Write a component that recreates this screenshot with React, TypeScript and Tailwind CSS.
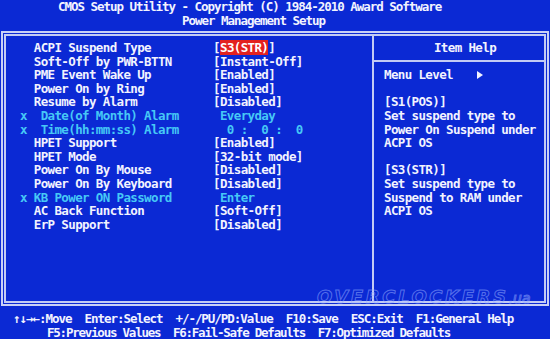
const items = [
  { label: 'ACPI Suspend Type', value: '[S3(STR)]', sel: true },
  { label: 'Soft-Off by PWR-BTTN', value: '[Instant-Off]' },
  { label: 'PME Event Wake Up', value: '[Enabled]' },
  { label: 'Power On by Ring', value: '[Enabled]' },
  { label: 'Resume by Alarm', value: '[Disabled]' },
  { label: 'Date(of Month) Alarm', value: ' Everyday', off: true, sub: true },
  { label: 'Time(hh:mm:ss) Alarm', value: '  0 :  0 :  0', off: true, sub: true },
  { label: 'HPET Support', value: '[Enabled]' },
  { label: 'HPET Mode', value: '[32-bit mode]' },
  { label: 'Power On By Mouse', value: '[Disabled]' },
  { label: 'Power On By Keyboard', value: '[Disabled]' },
  { label: 'KB Power ON Password', value: ' Enter', off: true },
  { label: 'AC Back Function', value: '[Soft-Off]' },
  { label: 'ErP Support', value: '[Disabled]' },
];

const help = [
  '',
  '[S1(POS)]',
  'Set suspend type to',
  'Power On Suspend under',
  'ACPI OS',
  '',
  '[S3(STR)]',
  'Set suspend type to',
  'Suspend to RAM under',
  'ACPI OS',
];

function ItemRow({ item }: { item: (typeof items)[number] }) {
  const head = ((item.off ? 'x ' : '  ') + (item.sub ? ' ' : '') + item.label).padEnd(28, ' ');
  return (
    <div className={`h-[13.6px] leading-[13.6px] whitespace-pre ${item.off ? 'text-[#46c8f6]' : 'text-[#f2f3ff]'}`}>
      {head}
      {item.sel ? (
        <>
          [<span className="bg-[#e3211f] text-white">S3(STR)</span>]
        </>
      ) : (
        item.value
      )}
    </div>
  );
}

export default function App() {
  return (
    <div className="relative w-[550px] h-[339px] overflow-hidden bg-[#0b29d4] font-['DejaVu_Sans_Mono',monospace] font-bold text-[12.5px] text-[#f2f3ff] flex flex-col">
      <div className="h-[27px] tracking-[-1.03px] whitespace-pre">
        <div className="h-[13.5px] leading-[14.5px] pl-[58px]">CMOS Setup Utility - Copyright (C) 1984-2010 Award Software</div>
        <div className="h-[13.5px] leading-[14.5px] pl-[182px]">Power Management Setup</div>
      </div>

      <div className="mt-[4px] ml-[1px] w-[548px] h-[275px] border-2 border-[#c9d0f6] p-px">
        <div className="h-full border-2 border-[#c3cbf4] flex tracking-[-0.63px]">
          <div className="w-[368px] border-r-2 border-[#c3cbf4] pt-[5px] pl-[14px]">
            {items.map((item, i) => (
              <ItemRow key={i} item={item} />
            ))}
          </div>
          <div className="flex-1 pt-[5px]">
            <div className="h-[13.6px] leading-[13.6px] pl-[12px] text-center">Item Help</div>
            <div className="h-[13.6px] flex items-center">
              <div className="w-full h-[2px] bg-[#c3cbf4]" />
            </div>
            <div className="pl-[10px]">
              <div className="h-[13.6px] leading-[13.6px] flex items-center whitespace-pre">
                <span>Menu Level</span>
                <span className="ml-[24px] w-0 h-0 border-l-[6px] border-l-[#f2f3ff] border-y-[4px] border-y-transparent" />
              </div>
              {help.map((line, i) => (
                <div key={i} className="h-[13.6px] leading-[13.6px] whitespace-pre">
                  {line}
                </div>
              ))}
            </div>
          </div>
        </div>
      </div>

      <div className="mt-[6px] h-[27px] whitespace-pre">
        <div className="h-[13.5px] leading-[14.5px] pl-[13px] tracking-[-1.03px]">↑↓→←:Move  Enter:Select  +/-/PU/PD:Value  F10:Save  ESC:Exit  F1:General Help</div>
        <div className="h-[13.5px] leading-[14.5px] pl-[47px] tracking-[-1.23px]">F5:Previous Values  F6:Fail-Safe Defaults  F7:Optimized Defaults</div>
      </div>

      <div className="absolute left-[317px] top-[283px] flex items-baseline font-['DejaVu_Sans',sans-serif] italic font-bold text-transparent [-webkit-text-stroke:1px_rgba(150,172,255,0.55)] pointer-events-none">
        <span className="text-[18px] tracking-[2.6px]">OVERCLOCKERS</span>
        <span className="text-[14px] font-normal">.ua</span>
      </div>
    </div>
  );
}
